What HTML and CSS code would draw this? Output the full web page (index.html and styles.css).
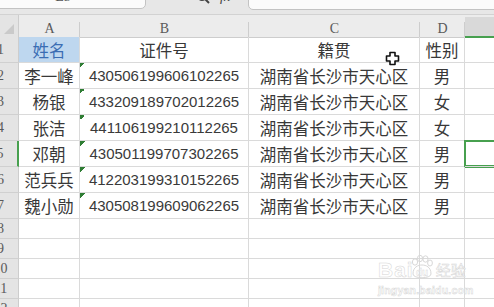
FILE: index.html
```html
<!DOCTYPE html>
<html lang="zh-CN">
<head>
  <meta charset="UTF-8" />
  <meta name="viewport" content="width=device-width, initial-scale=1.0" />
  <title>身份证信息表</title>
  <link rel="stylesheet" href="styles.css">
</head>
<body>
  <div class="app">
    <div class="toolbar">
      <div class="namebox">E5</div>
      <div class="fx-tools">
        <svg class="search" width="14" height="14" viewBox="0 0 14 14">
          <circle cx="6" cy="6" r="4.2" fill="none" stroke="#444" stroke-width="1.6"/>
          <path d="M9 9 L13 13" stroke="#444" stroke-width="2"/>
        </svg>
        <span class="fx">fx</span>
      </div>
      <div class="formula"></div>
    </div>

    <div class="sheet">
      <div class="row head">
        <div class="c rh corner"><span class="tri"></span></div>
        <div class="c ch">A</div>
        <div class="c ch">B</div>
        <div class="c ch">C</div>
        <div class="c ch">D</div>
        <div class="c ch ch-sel"></div>
      </div>
      <div class="row">
        <div class="c rh">1</div>
        <div class="c hl">姓名</div>
        <div class="c">证件号</div>
        <div class="c">籍贯</div>
        <div class="c">性别</div>
        <div class="c"></div>
      </div>
      <div class="row">
        <div class="c rh">2</div>
        <div class="c">李一峰</div>
        <div class="c num mark">430506199606102265</div>
        <div class="c">湖南省长沙市天心区</div>
        <div class="c">男</div>
        <div class="c"></div>
      </div>
      <div class="row">
        <div class="c rh">3</div>
        <div class="c">杨银</div>
        <div class="c num mark">433209189702012265</div>
        <div class="c">湖南省长沙市天心区</div>
        <div class="c">女</div>
        <div class="c"></div>
      </div>
      <div class="row">
        <div class="c rh">4</div>
        <div class="c">张洁</div>
        <div class="c num mark">441106199210112265</div>
        <div class="c">湖南省长沙市天心区</div>
        <div class="c">女</div>
        <div class="c"></div>
      </div>
      <div class="row">
        <div class="c rh rh-sel">5</div>
        <div class="c">邓朝</div>
        <div class="c num mark">430501199707302265</div>
        <div class="c">湖南省长沙市天心区</div>
        <div class="c">男</div>
        <div class="c active"></div>
      </div>
      <div class="row">
        <div class="c rh">6</div>
        <div class="c">范兵兵</div>
        <div class="c num mark">412203199310152265</div>
        <div class="c">湖南省长沙市天心区</div>
        <div class="c">男</div>
        <div class="c"></div>
      </div>
      <div class="row">
        <div class="c rh">7</div>
        <div class="c">魏小勋</div>
        <div class="c num mark">430508199609062265</div>
        <div class="c">湖南省长沙市天心区</div>
        <div class="c">男</div>
        <div class="c"></div>
      </div>
      <div class="row short">
        <div class="c rh">8</div>
        <div class="c"></div><div class="c"></div><div class="c"></div><div class="c"></div><div class="c"></div>
      </div>
      <div class="row short">
        <div class="c rh">9</div>
        <div class="c"></div><div class="c"></div><div class="c"></div><div class="c"></div><div class="c"></div>
      </div>
      <div class="row short">
        <div class="c rh">10</div>
        <div class="c"></div><div class="c"></div><div class="c"></div><div class="c"></div><div class="c"></div>
      </div>
      <div class="row short">
        <div class="c rh">11</div>
        <div class="c"></div><div class="c"></div><div class="c"></div><div class="c"></div><div class="c"></div>
      </div>
      <div class="row short">
        <div class="c rh">12</div>
        <div class="c"></div><div class="c"></div><div class="c"></div><div class="c"></div><div class="c"></div>
      </div>
    </div>

    <!-- mouse pointer (cell select cross) -->
    <svg class="cursor" width="15" height="15" viewBox="0 0 15 15">
      <path d="M5 1.5 H10 V5 H13.5 V10 H10 V13.5 H5 V10 H1.5 V5 H5 Z" fill="#fff" stroke="#111" stroke-width="1.6" stroke-linejoin="round"/>
    </svg>

    <div class="watermark">
      <div class="wm-top">
        <span class="wm-bai">Bai</span>
        <svg class="paw" width="27" height="27" viewBox="0 0 27 27">
          <g fill="none" stroke="#d8d8d8" stroke-width="1">
            <ellipse cx="7" cy="8" rx="2.6" ry="3.2"/>
            <ellipse cx="12" cy="4.5" rx="2.6" ry="3.2"/>
            <ellipse cx="17.5" cy="5" rx="2.6" ry="3.2"/>
            <ellipse cx="22" cy="9" rx="2.4" ry="3"/>
            <path d="M5 20 C5 13 10 11 14 11 C18 11 23 13 23 20 C23 25 5 25 5 20 Z"/>
          </g>
          <text x="14" y="22" text-anchor="middle" class="wm-du">du</text>
        </svg>
        <span class="wm-jy">经验</span>
      </div>
      <div class="wm-url">jingyan.baidu.com</div>
    </div>
  </div>
</body>
</html>
```

FILE: styles.css
```css
* { box-sizing: border-box; margin: 0; padding: 0; }
body {
  width: 494px;
  height: 307px;
  overflow: hidden;
  background: #fff;
  font-family: "Liberation Sans", "Noto Sans CJK SC", sans-serif;
  color: #383838;
}
.app { position: relative; width: 494px; height: 307px; overflow: hidden; }

.toolbar {
  display: flex;
  height: 31px;
  margin-top: -16px;
  background: #e7e7e7;
  border-bottom: 1px solid #d2d2d2;
}
.namebox {
  width: 166px;
  height: 25px;
  margin-left: -20px;
  background: #fbfbfb;
  border: 1px solid #c3c3c3;
  border-radius: 0 0 5px 5px;
  text-align: center;
  font-family: "Liberation Serif", serif;
  font-size: 14px;
  line-height: 24px;
  color: #555;
}
.fx-tools {
  width: 102px;
  height: 25px;
  display: flex;
  align-items: center;
  padding-left: 50px;
  gap: 10px;
}
.fx { font-family: "Liberation Serif", serif; font-style: italic; font-size: 14px; color: #444; }
.formula {
  flex: 1;
  height: 26px;
  margin-right: -10px;
  background: #fbfbfb;
  border: 1px solid #c3c3c3;
  border-radius: 0 0 5px 5px;
}

/* grid */
.sheet { display: flex; flex-direction: column; margin-left: -17px; }
.row {
  display: grid;
  grid-template-columns: 36px 61px 169px 171px 45px 60px;
  height: 26px;
}
.row.head { height: 22px; }
.row.short { height: 20px; }
.c {
  display: flex;
  align-items: center;
  justify-content: center;
  border-right: 1px solid #dadada;
  border-bottom: 1px solid #dadada;
  font-size: 16.5px;
  white-space: nowrap;
}
.num { font-size: 15px; color: #3a3a3a; }
.mark {
  background: linear-gradient(135deg, #2f7d34 50%, transparent 50%) no-repeat 0 0 / 5px 5px;
}
.hl { background: #bed7ef; color: #3a6db3; }

.rh {
  background: #e4e4e4;
  border-right-color: #cdcdcd;
  border-bottom-color: #d0d0d0;
  font-family: "Liberation Serif", serif;
  font-size: 14px;
  color: #5a5a5a;
}
.rh-sel { border-right: 2px solid #47a04f; }

.ch {
  background: #ececec linear-gradient(#cdcdcd, #cdcdcd) no-repeat right bottom / 1px 15px;
  border-right: none;
  border-bottom-color: #cdcdcd;
  font-family: "Liberation Serif", serif;
  font-size: 14px;
  color: #5a5a5a;
  padding-top: 6px;
}
.ch-sel {
  background: #ececec linear-gradient(#d9d9d9, #d9d9d9) no-repeat left bottom / 100% 19px;
  border-bottom: 2px solid #47a04f;
}
.corner { justify-content: flex-end; align-items: flex-end; padding: 0 4px 3px 0; }
.tri {
  width: 10px;
  height: 10px;
  background: #cacaca;
  clip-path: polygon(100% 0, 100% 100%, 0 100%);
}

.active { box-shadow: 0 0 0 1px #47a04f, inset 0 0 0 1px #47a04f; }

.cursor { position: absolute; left: 385px; top: 51px; }

/* site watermark */
.watermark {
  position: absolute;
  left: 378px;
  top: 254px;
  color: rgba(255, 255, 255, 0.9);
  -webkit-text-stroke: 0.5px #d6d6d6;
}
.wm-top { display: flex; align-items: flex-end; }
.wm-bai { font-size: 21px; font-weight: bold; line-height: 22px; letter-spacing: 1px; }
.paw { margin-left: -6px; }
.wm-du { font-size: 10px; font-weight: bold; fill: #fff; stroke: #d6d6d6; stroke-width: 0.4px; }
.wm-jy { font-size: 15px; line-height: 20px; margin-left: 1px; }
.wm-url { font-size: 10.5px; font-weight: bold; margin-top: 3px; letter-spacing: 0.2px; }
```
